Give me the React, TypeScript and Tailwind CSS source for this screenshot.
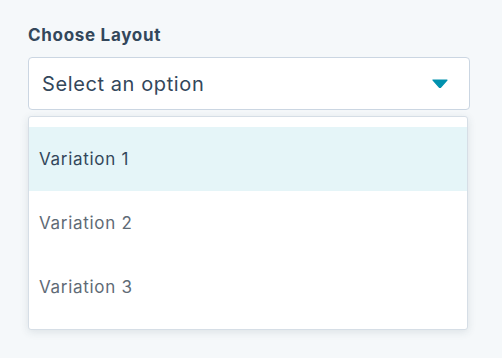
import React from "react";

export default function App() {
  const items = ["Variation 1", "Variation 2", "Variation 3"];
  return (
    <div
      className="w-[502px] h-[358px] bg-[#f5f8fa] overflow-hidden"
      style={{ fontFamily: "Inter, 'Noto Sans', sans-serif" }}
    >
      <div className="pl-[28px] pt-[24px] w-[470px]">
        <div className="text-[17px] leading-[22px] font-bold text-[#33475b] h-[22px] tracking-[0.7px]">
          Choose Layout
        </div>
        <div className="mt-[11px] h-[53px] w-[442px] bg-white border border-[#cbd6e2] rounded-[4px] flex items-center justify-between pl-[13px] pr-[21px]">
          <span className="text-[20px] text-[#33475b] tracking-[0.6px]">Select an option</span>
          <svg width="16" height="9" viewBox="0 0 16 9">
            <path d="M1 1 L15 1 L8.8 8 Q8 8.8 7.2 8 Z" fill="#0091ae" stroke="#0091ae" strokeWidth="1.2" strokeLinejoin="round" />
          </svg>
        </div>
        <div className="mt-[6px] w-[440px] bg-white border border-[#d6dee6] rounded-[3px] shadow-[0_2px_8px_rgba(45,62,80,0.12)] py-[10px]">
          {items.map((t, i) => (
            <div
              key={t}
              className={
                "h-[64px] flex items-center pl-[10px] pt-[1px] text-[17px] tracking-[0.7px] " +
                (i === 0 ? "bg-[#e5f5f8] text-[#33475b]" : "text-[#5f6b76]")
              }
            >
              {t}
            </div>
          ))}
        </div>
      </div>
    </div>
  );
}
